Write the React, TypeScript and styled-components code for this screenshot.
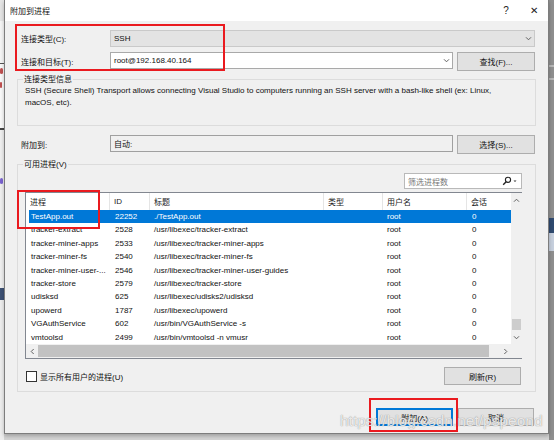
import React from "react";
import styled, { createGlobalStyle } from "styled-components";

const GlobalStyle = createGlobalStyle`
  html, body {
    margin: 0;
    padding: 0;
  }
  body {
    width: 554px;
    height: 440px;
    overflow: hidden;
    background: #d4d4d4;
    font-family: "Liberation Sans", "Noto Sans CJK SC", sans-serif;
    font-size: 8px;
    color: #000;
  }
`;

const Screen = styled.div`
  display: flex;
  width: 554px;
  height: 440px;
  overflow: hidden;
`;

/* slivers of the IDE visible behind the dialog */
const Backdrop = styled.div<{ $w: number; $bg: string }>`
  display: flex;
  flex-direction: column;
  width: ${(p) => p.$w}px;
  flex: none;
  background: ${(p) => p.$bg};
  overflow: hidden;
`;

const Band = styled.div<{ $h: number; $bg: string }>`
  display: flex;
  align-items: center;
  height: ${(p) => p.$h}px;
  flex: none;
  background: ${(p) => p.$bg};
`;

const Fragment = styled.div<{ $color: string; $w: number }>`
  width: ${(p) => p.$w}px;
  height: 6px;
  border-radius: 2px;
  background: ${(p) => p.$color};
`;

const Center = styled.div`
  display: flex;
  flex-direction: column;
  width: 545px;
  flex: none;
`;

const Window = styled.div`
  position: relative;
  display: flex;
  flex-direction: column;
  height: 434px;
  box-sizing: border-box;
  border: 1px solid #7d7d7d;
  border-top: none;
  background: #f0f0f0;
  box-shadow: 0 2px 4px rgba(0, 0, 0, 0.25);
`;

const TitleBar = styled.div`
  display: flex;
  align-items: center;
  height: 21px;
  flex: none;
  padding-left: 5px;
  background: #fff;
`;

const Title = styled.div`
  flex: 1;
  font-size: 8px;
  color: #111;
`;

const CaptionButton = styled.div`
  width: 28px;
  height: 21px;
  display: flex;
  align-items: center;
  justify-content: center;
  color: #222;
  font-size: 10px;
`;

const Body = styled.div`
  display: flex;
  flex-direction: column;
  flex: 1;
  padding: 0 12px;
`;

const FormGrid = styled.div<{ $mt: number }>`
  position: relative;
  display: grid;
  grid-template-columns: 89px 343px 78px;
  column-gap: 4px;
  row-gap: 5px;
  margin-top: ${(p) => p.$mt}px;
`;

const Label = styled.div`
  padding-left: 4px;
  align-self: center;
  color: #111;
`;

const Field = styled.div<{ $bg: string; $border: string; $span?: boolean; $top?: boolean }>`
  display: flex;
  align-items: ${(p) => (p.$top ? "flex-start" : "center")};
  height: 17px;
  box-sizing: border-box;
  padding: ${(p) => (p.$top ? "2px 2px 0 3px" : "0 2px 0 3px")};
  background: ${(p) => p.$bg};
  border: 1px solid ${(p) => p.$border};
  grid-column: ${(p) => (p.$span ? "2 / 4" : "auto")};
  align-self: start;
`;

const FieldText = styled.span`
  flex: 1;
  color: #111;
`;

const Button = styled.div<{ $w?: number; $h?: number; $default?: boolean }>`
  display: flex;
  align-items: center;
  justify-content: center;
  width: ${(p) => (p.$w ? `${p.$w}px` : "auto")};
  height: ${(p) => p.$h || 19}px;
  box-sizing: border-box;
  background: #e1e1e1;
  border: 1px solid ${(p) => (p.$default ? "#0078d7" : "#adadad")};
  box-shadow: ${(p) => (p.$default ? "inset 0 0 0 1px #0078d7" : "none")};
  color: #111;
`;

const Marked = styled.div`
  position: relative;
`;

const Highlight = styled.div<{ $l: number; $t: number; $w: number; $h: number }>`
  position: absolute;
  left: ${(p) => p.$l}px;
  top: ${(p) => p.$t}px;
  width: ${(p) => p.$w}px;
  height: ${(p) => p.$h}px;
  box-sizing: border-box;
  border: 2px solid #ea1a1f;
  pointer-events: none;
`;

const Group = styled.div<{ $mt: number; $h?: number }>`
  margin-top: ${(p) => p.$mt}px;
  border: 1px solid #dcdcdc;
  height: ${(p) => (p.$h ? `${p.$h}px` : "auto")};
  box-sizing: border-box;
`;

const Legend = styled.div`
  margin: -6px 0 0 5px;
  width: fit-content;
  padding: 0 1px;
  line-height: 11px;
  background: #f0f0f0;
  color: #111;
`;

const InfoText = styled.div`
  padding: 0 7px;
  line-height: 12px;
  color: #111;
  white-space: nowrap;
`;

const ProcBody = styled.div`
  display: flex;
  flex-direction: column;
  padding: 0 13px 6px 7px;
`;

const Filter = styled.div`
  align-self: flex-end;
  display: flex;
  align-items: center;
  width: 118px;
  height: 16px;
  margin-top: 3px;
  box-sizing: border-box;
  padding: 0 3px 0 3px;
  background: #fff;
  border: 1px solid #b9b9b9;
`;

const Placeholder = styled.span`
  flex: 1;
  color: #777;
`;

const ListWrap = styled(Marked)`
  margin-top: 3px;
`;

const ListBox = styled.div`
  display: grid;
  grid-template-columns: 485px 11px;
  grid-template-rows: 151px 14px;
  border: 1px solid #828790;
  background: #fff;
`;

const ListContent = styled.div`
  overflow: hidden;
`;

const HeaderRow = styled.div`
  display: grid;
  grid-template-columns: 84px 40px 174px 59px 84px 1fr;
  height: 17px;
`;

const HeaderCell = styled.div`
  display: flex;
  align-items: center;
  padding-left: 4px;
  border-right: 1px solid #e5e5e5;
  color: #1a1a1a;
  &:last-child {
    border-right: none;
  }
`;

const Row = styled.div<{ $selected?: boolean }>`
  display: grid;
  grid-template-columns: 81px 40px 174px 59px 84px 1fr;
  margin-left: 3px;
  height: 13.4px;
  line-height: 13.4px;
  background: ${(p) => (p.$selected ? "#0078d7" : "transparent")};
  color: ${(p) => (p.$selected ? "#fff" : "#111")};
`;

const Cell = styled.div<{ $pl: number }>`
  padding-left: ${(p) => p.$pl}px;
  white-space: nowrap;
  overflow: hidden;
`;

const VScroll = styled.div`
  display: flex;
  flex-direction: column;
  background: #f0f0f0;
`;

const HScroll = styled.div`
  display: flex;
  background: #f0f0f0;
`;

const ArrowBox = styled.div<{ $w: number; $h: number }>`
  display: flex;
  align-items: center;
  justify-content: center;
  width: ${(p) => p.$w}px;
  height: ${(p) => p.$h}px;
  flex: none;
`;

const VTrack = styled.div`
  flex: 1;
  display: flex;
  flex-direction: column;
  justify-content: flex-end;
  align-items: center;
`;

const VThumb = styled.div`
  width: 9px;
  height: 11px;
  margin-bottom: 1px;
  background: #cdcdcd;
`;

const HTrack = styled.div`
  flex: 1;
  display: flex;
  align-items: center;
`;

const HThumb = styled.div`
  width: 451px;
  height: 12px;
  background: #c2c2c2;
`;

const Corner = styled.div`
  background: #f0f0f0;
`;

const FooterRow = styled.div`
  display: flex;
  align-items: center;
  justify-content: space-between;
  margin-top: 8px;
`;

const CheckLabel = styled.label`
  display: flex;
  align-items: center;
  gap: 3px;
  margin-left: 1px;
  color: #111;
`;

const CheckBox = styled.span`
  width: 11px;
  height: 11px;
  box-sizing: border-box;
  border: 1px solid #333;
  background: #fff;
`;

const DialogButtons = styled.div`
  display: flex;
  justify-content: flex-end;
  gap: 5px;
  margin: 16px 2px 0 0;
`;

const Watermark = styled.div`
  position: absolute;
  left: 335px;
  top: 412px;
  font-size: 15.5px;
  line-height: 18px;
  color: rgba(255, 255, 255, 0.8);
  text-shadow: 0 0 1px rgba(120, 120, 120, 0.55), 0 0 1px rgba(120, 120, 120, 0.55);
  white-space: nowrap;
  pointer-events: none;
`;

const Chevron = ({ dir = "down" }: { dir?: "down" | "up" | "left" | "right" }) => {
  const rot = { down: 0, up: 180, left: 90, right: -90 }[dir];
  return (
    <svg width="7" height="7" viewBox="0 0 7 7" style={{ transform: `rotate(${rot}deg)` }}>
      <path d="M1 2.3 L3.5 4.8 L6 2.3" fill="none" stroke="#606060" strokeWidth="1" />
    </svg>
  );
};

const SearchIcon = () => (
  <svg width="10" height="10" viewBox="0 0 10 10">
    <circle cx="6" cy="3.8" r="2.6" fill="none" stroke="#222" strokeWidth="1.1" />
    <path d="M4.2 5.7 L1.2 8.8" stroke="#222" strokeWidth="1.4" />
  </svg>
);

const DropTri = () => (
  <svg width="6" height="6" viewBox="0 0 6 6">
    <path d="M1.5 2.5 L4.5 2.5 L3 4 Z" fill="#333" />
  </svg>
);

const processes = [
  ["TestApp.out", "22252", "./TestApp.out"],
  ["tracker-extract", "2528", "/usr/libexec/tracker-extract"],
  ["tracker-miner-apps", "2533", "/usr/libexec/tracker-miner-apps"],
  ["tracker-miner-fs", "2540", "/usr/libexec/tracker-miner-fs"],
  ["tracker-miner-user-...", "2546", "/usr/libexec/tracker-miner-user-guides"],
  ["tracker-store", "2579", "/usr/libexec/tracker-store"],
  ["udisksd", "625", "/usr/libexec/udisks2/udisksd"],
  ["upowerd", "1787", "/usr/libexec/upowerd"],
  ["VGAuthService", "602", "/usr/bin/VGAuthService -s"],
  ["vmtoolsd", "2499", "/usr/bin/vmtoolsd -n vmusr"],
];

const headers = ["进程", "ID", "标题", "类型", "用户名", "会话"];

export default function App() {
  return (
    <>
      <GlobalStyle />
      <Screen>
        <Backdrop $w={4} $bg="#f3f3f3">
          <Band $h={21} $bg="#e6e6e6" />
          <Band $h={42} $bg="#f6f6f6" />
          <Band $h={1} $bg="#555" />
          <Band $h={14} $bg="#fafafa">
            <Fragment $color="#c05050" $w={3} />
          </Band>
          <Band $h={14} $bg="#fafafa">
            <Fragment $color="#c05050" $w={2} />
          </Band>
          <Band $h={36} $bg="#fafafa" />
          <Band $h={2} $bg="#444" />
          <Band $h={44} $bg="#f0f0f0" />
          <Band $h={14} $bg="#f0f0f0">
            <Fragment $color="#7b63d0" $w={3} />
          </Band>
          <Band $h={100} $bg="#f0f0f0" />
          <Band $h={12} $bg="#3d5174" />
          <Band $h={150} $bg="#eeeeee" />
        </Backdrop>
        <Center>
          <Window>
            <TitleBar>
              <Title>附加到进程</Title>
              <CaptionButton>?</CaptionButton>
              <CaptionButton>✕</CaptionButton>
            </TitleBar>
            <Body>
              <FormGrid $mt={9}>
                <Label>连接类型(C):</Label>
                <Field $bg="#e3e3e3" $border="#c9c9c9" $span>
                  <FieldText>SSH</FieldText>
                  <Chevron />
                </Field>
                <Label>连接和目标(T):</Label>
                <Field $bg="#fff" $border="#a9a9a9">
                  <FieldText>root@192.168.40.164</FieldText>
                  <Chevron />
                </Field>
                <Button>查找(F)...</Button>
                <Highlight $l={-2} $t={-6} $w={210} $h={47} />
              </FormGrid>

              <Group $mt={8} $h={47}>
                <Legend>连接类型信息</Legend>
                <InfoText>
                  SSH (Secure Shell) Transport allows connecting Visual Studio to computers running an SSH
                  server with a bash-like shell (ex: Linux,
                  <br />
                  macOS, etc).
                </InfoText>
              </Group>

              <FormGrid $mt={9}>
                <Label>附加到:</Label>
                <Field $bg="#f0f0f0" $border="#a0a0a0" $top>
                  <FieldText>自动:</FieldText>
                </Field>
                <Button>选择(S)...</Button>
              </FormGrid>

              <Group $mt={10}>
                <Legend>可用进程(V)</Legend>
                <ProcBody>
                  <Filter>
                    <Placeholder>筛选进程数</Placeholder>
                    <SearchIcon />
                    <DropTri />
                  </Filter>
                  <ListWrap>
                    <ListBox>
                      <ListContent>
                        <HeaderRow>
                          {headers.map((h) => (
                            <HeaderCell key={h}>{h}</HeaderCell>
                          ))}
                        </HeaderRow>
                        {processes.map(([name, id, title], i) => (
                          <Row key={name} $selected={i === 0}>
                            <Cell $pl={2}>{name}</Cell>
                            <Cell $pl={5}>{id}</Cell>
                            <Cell $pl={4}>{title}</Cell>
                            <Cell $pl={4} />
                            <Cell $pl={4}>root</Cell>
                            <Cell $pl={5}>0</Cell>
                          </Row>
                        ))}
                      </ListContent>
                      <VScroll>
                        <ArrowBox $w={11} $h={14}>
                          <Chevron dir="up" />
                        </ArrowBox>
                        <VTrack>
                          <VThumb />
                        </VTrack>
                        <ArrowBox $w={11} $h={13}>
                          <Chevron />
                        </ArrowBox>
                      </VScroll>
                      <HScroll>
                        <ArrowBox $w={12} $h={14}>
                          <Chevron dir="left" />
                        </ArrowBox>
                        <HTrack>
                          <HThumb />
                        </HTrack>
                        <ArrowBox $w={12} $h={14}>
                          <Chevron dir="right" />
                        </ArrowBox>
                      </HScroll>
                      <Corner />
                    </ListBox>
                    <Highlight $l={-8} $t={-2} $w={83} $h={39} />
                  </ListWrap>
                  <FooterRow>
                    <CheckLabel>
                      <CheckBox />
                      显示所有用户的进程(U)
                    </CheckLabel>
                    <Button $w={77} $h={18} style={{ marginRight: 1 }}>
                      刷新(R)
                    </Button>
                  </FooterRow>
                </ProcBody>
              </Group>

              <DialogButtons>
                <Marked>
                  <Button $w={77} $h={18} $default>
                    附加(A)
                  </Button>
                  <Highlight $l={-7} $t={-10} $w={89} $h={34} />
                </Marked>
                <Button $w={76} $h={18}>
                  取消
                </Button>
              </DialogButtons>
            </Body>
            <Watermark>https://blog.csdn.net/pspeond</Watermark>
          </Window>
        </Center>
        <Backdrop $w={5} $bg="#8f8f8f">
          <Band $h={65} $bg="#8f8f8f" />
          <Band $h={2} $bg="#b8b8b8" />
          <Band $h={11} $bg="#8f8f8f" />
          <Band $h={2} $bg="#b8b8b8" />
          <Band $h={138} $bg="#8f8f8f" />
          <Band $h={15} $bg="#2f4a70" />
          <Band $h={18} $bg="#c7d0de" />
          <Band $h={189} $bg="#8f8f8f" />
        </Backdrop>
      </Screen>
    </>
  );
}
